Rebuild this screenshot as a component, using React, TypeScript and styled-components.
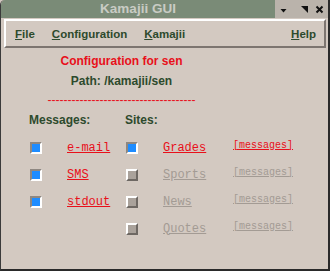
import React from "react";
import styled, { createGlobalStyle } from "styled-components";

const Global = createGlobalStyle`
  html, body { margin: 0; padding: 0; background: #d3c9c1; }
  body { width: 330px; height: 271px; overflow: hidden; }
`;

const Window = styled.div`
  width: 330px;
  height: 271px;
  box-sizing: border-box;
  background: #d3c9c1;
  border-left: 1px solid #3a3a3a;
  border-right: 2px solid #2a2a2a;
  border-bottom: 2px solid #2a2a2a;
  border-top-left-radius: 5px;
  display: flex;
  flex-direction: column;
  overflow: hidden;
  font-family: "Liberation Sans", Arial, sans-serif;
`;

const TitleBar = styled.div`
  height: 18px;
  flex: none;
  display: flex;
  align-items: stretch;
  background: #7a8b77;
`;

const Title = styled.div`
  flex: 1;
  text-align: center;
  color: #c9cbc4;
  font-weight: bold;
  font-size: 13.5px;
  line-height: 18px;
`;

const TitleButtons = styled.div`
  width: 53px;
  background: #bab3ab;
  display: flex;
  align-items: center;
  padding-left: 4px;
  box-sizing: border-box;
  svg { flex: none; }
  svg + svg { margin-left: 12px; }
  svg:last-child { margin-left: 6px; }
`;

const MenuBar = styled.div`
  margin: 1px 2px 0 3px;
  height: 29px;
  flex: none;
  box-sizing: border-box;
  border-top: 2px solid #ffffff;
  border-left: 2px solid #ffffff;
  border-bottom: 2px solid #7d7570;
  border-right: 2px solid #7d7570;
  display: flex;
  align-items: center;
  padding: 0 8px 0 9px;
`;

const MenuItem = styled.span<{ $right?: boolean }>`
  color: #2d4a2d;
  font-weight: bold;
  font-size: 11.5px;
  margin-right: ${(p) => (p.$right ? "0" : "17px")};
  margin-left: ${(p) => (p.$right ? "auto" : "0")};
  u { text-decoration: underline; }
`;

const Content = styled.div`
  flex: 1;
  display: flex;
  flex-direction: column;
  padding-top: 3px;
`;

const Header = styled.div`
  width: 241px;
  display: flex;
  flex-direction: column;
  align-items: center;
`;

const HeadLine = styled.div<{ $color: string; $h: number }>`
  color: ${(p) => p.$color};
  font-weight: bold;
  font-size: 12px;
  height: ${(p) => p.$h}px;
  line-height: ${(p) => p.$h}px;
  white-space: nowrap;
`;

const Dashes = styled.div`
  color: #e8101a;
  font-family: "Liberation Sans", Arial, sans-serif;
  font-size: 12px;
  height: 18px;
  line-height: 18px;
  letter-spacing: 0px;
  white-space: nowrap;
`;

const Grid = styled.div`
  display: grid;
  grid-template-columns: 12px 84px 12px 95px auto;
  grid-template-rows: 24px repeat(4, 27px);
  padding-left: 29px;
  margin-top: 1px;
  align-items: center;
`;

const ColHead = styled.div<{ $col: number }>`
  grid-column: ${(p) => p.$col} / span 2;
  color: #2d4a2d;
  font-weight: bold;
  font-size: 12px;
  margin-left: -1px;
  height: 20px;
  line-height: 20px;
  align-self: start;
`;

const Box = styled.div<{ $on: boolean }>`
  width: 12px;
  height: 12px;
  box-sizing: border-box;
  background: ${(p) => (p.$on ? "#1e8cff" : "#aaa29b")};
  border-style: solid;
  border-width: 2px;
  border-color: ${(p) =>
    p.$on
      ? "#8e8781 #ffffff #ffffff #8e8781"
      : "#ffffff #6e6863 #6e6863 #ffffff"};
`;

const Label = styled.span<{ $on: boolean }>`
  font-family: "Liberation Mono", "DejaVu Sans Mono", monospace;
  font-size: 12px;
  color: ${(p) => (p.$on ? "#e8101a" : "#a39b94")};
  text-decoration: underline;
  margin-left: 25px;
  white-space: nowrap;
`;

const Msgs = styled.span<{ $on: boolean }>`
  font-family: "Liberation Mono", "DejaVu Sans Mono", monospace;
  font-size: 10px;
  color: ${(p) => (p.$on ? "#e8101a" : "#a39b94")};
  text-decoration: underline;
  margin-top: -5px;
  white-space: nowrap;
`;

const Empty = styled.span``;

const messages = [
  { name: "e-mail", on: true },
  { name: "SMS", on: true },
  { name: "stdout", on: true },
];
const sites = [
  { name: "Grades", on: true },
  { name: "Sports", on: false },
  { name: "News", on: false },
  { name: "Quotes", on: false },
];

export default function App() {
  return (
    <>
      <Global />
      <Window>
        <TitleBar>
          <Title>Kamajii GUI</Title>
          <TitleButtons>
            <svg width="9" height="9" viewBox="0 0 9 9">
              <path d="M1.5 4 L7.5 4 L4.5 7.5 Z" fill="#111" />
            </svg>
            <svg width="9" height="9" viewBox="0 0 9 9">
              <path d="M1 1 L8 1 L8 8 Z" fill="#111" />
            </svg>
            <svg width="9" height="9" viewBox="0 0 9 9">
              <path d="M1.5 1.5 L7.5 7.5 M7.5 1.5 L1.5 7.5" stroke="#111" strokeWidth="2" />
            </svg>
          </TitleButtons>
        </TitleBar>
        <MenuBar>
          <MenuItem><u>F</u>ile</MenuItem>
          <MenuItem><u>C</u>onfiguration</MenuItem>
          <MenuItem><u>K</u>amajii</MenuItem>
          <MenuItem $right><u>H</u>elp</MenuItem>
        </MenuBar>
        <Content>
          <Header>
            <HeadLine $color="#e8101a" $h={20}>Configuration for sen</HeadLine>
            <HeadLine $color="#2d4a2d" $h={20}>Path: /kamajii/sen</HeadLine>
            <Dashes>-------------------------------------</Dashes>
          </Header>
          <Grid>
            <ColHead $col={1}>Messages:</ColHead>
            <ColHead $col={3}>Sites:</ColHead>
            <Empty />
            {sites.map((s, i) => {
              const m = messages[i];
              return (
                <React.Fragment key={s.name}>
                  {m ? <Box $on={m.on} /> : <Empty />}
                  {m ? <Label $on={m.on}>{m.name}</Label> : <Empty />}
                  <Box $on={s.on} />
                  <Label $on={s.on}>{s.name}</Label>
                  <Msgs $on={s.on}>[messages]</Msgs>
                </React.Fragment>
              );
            })}
          </Grid>
        </Content>
      </Window>
    </>
  );
}
